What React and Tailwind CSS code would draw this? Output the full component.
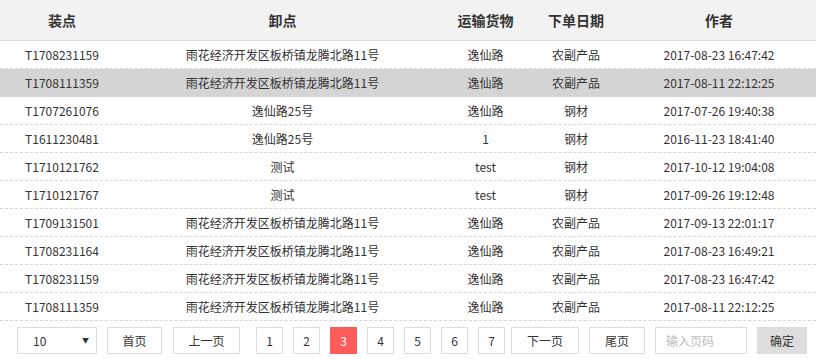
import React from 'react'

const rows = [
  ['T1708231159', '雨花经济开发区板桥镇龙腾北路11号', '逸仙路', '农副产品', '2017-08-23 16:47:42'],
  ['T1708111359', '雨花经济开发区板桥镇龙腾北路11号', '逸仙路', '农副产品', '2017-08-11 22:12:25'],
  ['T1707261076', '逸仙路25号', '逸仙路', '钢材', '2017-07-26 19:40:38'],
  ['T1611230481', '逸仙路25号', '1', '钢材', '2016-11-23 18:41:40'],
  ['T1710121762', '测试', 'test', '钢材', '2017-10-12 19:04:08'],
  ['T1710121767', '测试', 'test', '钢材', '2017-09-26 19:12:48'],
  ['T1709131501', '雨花经济开发区板桥镇龙腾北路11号', '逸仙路', '农副产品', '2017-09-13 22:01:17'],
  ['T1708231164', '雨花经济开发区板桥镇龙腾北路11号', '逸仙路', '农副产品', '2017-08-23 16:49:21'],
  ['T1708231159', '雨花经济开发区板桥镇龙腾北路11号', '逸仙路', '农副产品', '2017-08-23 16:47:42'],
  ['T1708111359', '雨花经济开发区板桥镇龙腾北路11号', '逸仙路', '农副产品', '2017-08-11 22:12:25'],
]

const cols = 'grid grid-cols-[124px_317px_89px_92px_194px]'

function PageBtn({ children, w = 'w-[27px]', active }) {
  return (
    <button
      className={`h-[27px] ${w} shrink-0 border text-[12px] ${
        active ? 'bg-[#ff5b5b] border-[#ff5b5b] text-white' : 'bg-white border-[#ddd] text-[#333]'
      }`}
    >
      {children}
    </button>
  )
}

export default function App() {
  return (
    <div className="w-[816px] h-[359px] bg-white text-[#333] text-[12px] overflow-hidden" style={{ fontFamily: '"Noto Sans CJK SC", "Microsoft YaHei", sans-serif' }}>
      {/* header */}
      <div className={`${cols} h-[41px] bg-[#f2f2f2] border-b border-[#d9d9d9] items-center text-center text-[14px] font-bold text-[#333]`}>
        <div>装点</div>
        <div>卸点</div>
        <div>运输货物</div>
        <div>下单日期</div>
        <div>作者</div>
      </div>

      {/* rows */}
      {rows.map((r, i) => (
        <div
          key={i}
          className={`${cols} h-[28px] items-center text-center border-b border-dashed border-[#d6d6d6] ${
            i === 1 ? 'bg-[#d4d4d4]' : 'bg-white'
          }`}
        >
          {r.map((c, j) => (
            <div key={j} className="leading-none">{c}</div>
          ))}
        </div>
      ))}

      {/* pagination */}
      <div className="flex items-center pl-[17px] pt-[6px]">
        <div className="h-[27px] w-[80px] border border-[#ddd] flex items-center justify-between pl-[15px] pr-[7px]">
          <span>10</span>
          <span className="text-[7px]">▼</span>
        </div>
        <div className="ml-[10px]"><PageBtn w="w-[55px]">首页</PageBtn></div>
        <div className="ml-[11px]"><PageBtn w="w-[67px]">上一页</PageBtn></div>
        <div className="flex gap-[10px] ml-[16px]">
          <PageBtn>1</PageBtn>
          <PageBtn>2</PageBtn>
          <PageBtn active>3</PageBtn>
          <PageBtn>4</PageBtn>
          <PageBtn>5</PageBtn>
          <PageBtn>6</PageBtn>
          <PageBtn>7</PageBtn>
        </div>
        <div className="flex gap-[10px] ml-[6px]">
          <PageBtn w="w-[68px]">下一页</PageBtn>
          <PageBtn w="w-[56px]">尾页</PageBtn>
        </div>
        <div className="ml-[10px] h-[27px] w-[92px] border border-[#ddd] flex items-center pl-[10px] text-[#bbb]">
          输入页码
        </div>
        <button className="ml-[10px] h-[27px] w-[50px] bg-[#ddd] text-[#333] text-[12px]">确定</button>
      </div>
    </div>
  )
}
